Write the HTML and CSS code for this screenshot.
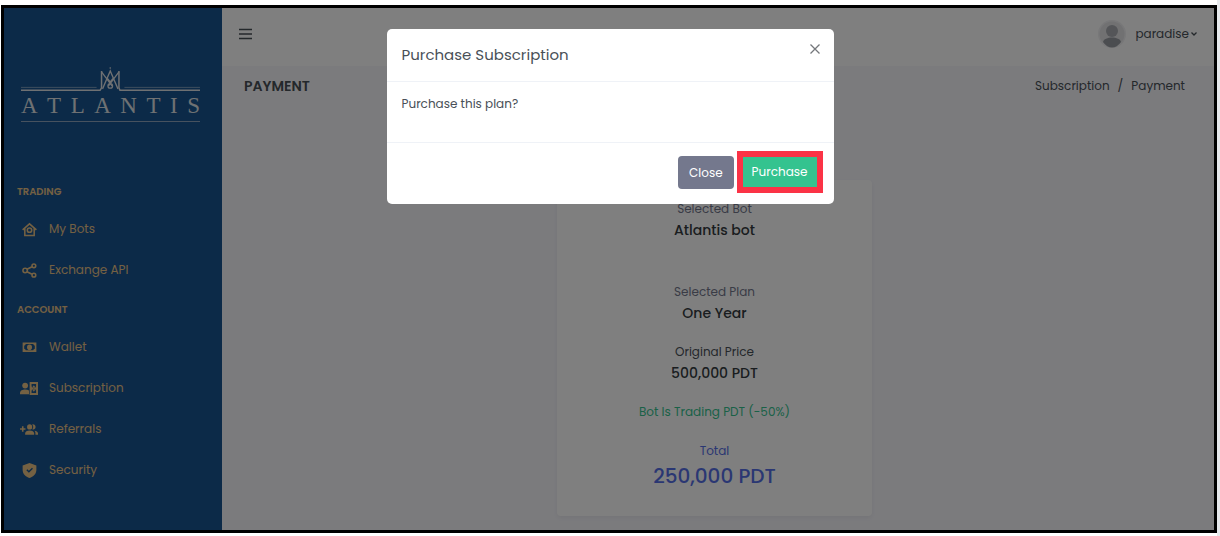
FILE: index.html
```html
<!DOCTYPE html>
<html lang="en">
<head>
<meta charset="utf-8">
<title>Payment</title>
<link rel="stylesheet" href="styles.css">
</head>
<body>
<div class="frame">
  <aside class="sidebar">
    <a class="brand" href="#" aria-label="Atlantis">
      <svg class="crest" viewBox="0 0 180 28" fill="none" stroke="currentColor" aria-hidden="true">
        <path d="M0 21.500H76M104 21.500H180" stroke-width="1" opacity=".5"/>
        <path d="M0 24.500H79.500L81 22V5M180 24.500H99.500L98.500 22V5" stroke-width="1.500"/>
        <path d="M81 6L91.500 20M98.500 6L88 20M82 23L89.750 5L97.500 23M86.500 12L89.750 16L93 12" stroke-width="1.300"/>
        <circle cx="89.750" cy="20" r="2.300" stroke-width="1.300"/>
        <circle cx="89.750" cy="2" r=".800" fill="currentColor" stroke="none"/>
      </svg>
      <span class="wordmark"><span>A</span><span>T</span><span>L</span><span>A</span><span>N</span><span>T</span><span>I</span><span>S</span></span>
    </a>
    <nav class="menu">
      <h2 class="menu-title">TRADING</h2>
      <a class="menu-item" href="#">
        <svg class="icon" viewBox="0 0 24 24" fill="none" stroke="currentColor" stroke-width="2.500"><path d="M1 12.500L12 3L23 12.500M4.500 10V21.500H19.500V10"/><circle cx="12" cy="13" r="3.500"/></svg>
        <span>My Bots</span></a>
      <a class="menu-item" href="#">
        <svg class="icon" viewBox="0 0 24 24" fill="none" stroke="currentColor" stroke-width="2.500"><circle cx="5" cy="12" r="3.500"/><circle cx="19" cy="4.500" r="3"/><circle cx="19" cy="19.500" r="3"/><path d="M8 10L16 6M8 14L16 18"/></svg>
        <span>Exchange API</span></a>
      <h2 class="menu-title">ACCOUNT</h2>
      <a class="menu-item" href="#">
        <svg class="icon" viewBox="0 0 24 24" fill="currentColor"><path fill-rule="evenodd" d="M1 4H23V19H1ZM6 6.500A3 3 0 0 1 3.500 9V14A3 3 0 0 1 6 16.500H18A3 3 0 0 1 20.500 14V9A3 3 0 0 1 18 6.500Z"/><ellipse cx="12" cy="11.500" rx="4" ry="4.500"/></svg>
        <span>Wallet</span></a>
      <a class="menu-item" href="#">
        <svg class="icon icon-wide" viewBox="0 0 28 22" fill="currentColor"><circle cx="8" cy="6.500" r="4.500"/><path d="M0 20V18C0 14 4 12.500 8 12.500C10.500 12.500 12.500 13 14 14V20Z"/><path fill-rule="evenodd" d="M15 1H28V21H15ZM18 4V7A3 3 0 0 0 25 7V4ZM18 18V15A3 3 0 0 1 25 15V18Z"/><path d="M18.500 10L21.500 6L24.500 10ZM18.500 12L21.500 16L24.500 12Z"/></svg>
        <span>Subscription</span></a>
      <a class="menu-item" href="#">
        <svg class="icon icon-wide" viewBox="0 0 28 22" fill="currentColor"><path d="M3 6H5.500V9H8.500V11.500H5.500V14.500H3V11.500H0V9H3Z"/><circle cx="15" cy="7" r="4"/><path d="M8 19V17C8 14 11 12.500 15 12.500S22 14 22 17V19ZM19 3.200A4 4 0 1 1 19 10.800A6 6 0 0 0 19 3.200ZM22.500 13C26 13.500 28 15 28 17V19H24V17C24 15 23.500 14 22.500 13Z"/></svg>
        <span>Referrals</span></a>
      <a class="menu-item" href="#">
        <svg class="icon" viewBox="0 0 24 24" fill="currentColor"><path fill-rule="evenodd" d="M12 0L23 4V11C23 17 18 22 12 24C6 22 1 17 1 11V4ZM7 11.500L11 15.500L17.500 9L16 7.500L11 12.500L8.500 10Z"/></svg>
        <span>Security</span></a>
    </nav>
  </aside>
  <div class="content">
    <header class="topbar">
      <button class="burger" type="button" aria-label="Toggle menu"><svg viewBox="0 0 13 12" stroke="currentColor" stroke-width="1.500"><path d="M0 1.500H13M0 6H13M0 10.500H13"/></svg></button>
      <button class="user" type="button">
        <svg class="avatar" viewBox="0 0 28 28" aria-hidden="true"><circle cx="14" cy="14" r="14" fill="#f0f0f2"/><circle cx="14" cy="14" r="12.500" fill="#e2e2e5"/><circle cx="14" cy="11" r="6" fill="#a8abb0"/><path d="M5 22C6 16 22 16 23 22Q19 27.500 14 27.500T5 22Z" fill="#979ba1"/></svg>
        <span>paradise</span>
        <svg class="chevron" viewBox="0 0 6 4" fill="none" stroke="currentColor" stroke-width="1.300"><path d="M.500 .500L3 3L5.500 .500"/></svg>
      </button>
    </header>
    <div class="page-head">
      <h1 class="page-title">PAYMENT</h1>
      <nav class="crumbs"><a href="#">Subscription</a><span>/</span><span>Payment</span></nav>
    </div>
    <main class="main">
      <div class="card">
        <section class="line line-bot"><p>Selected Bot</p><strong>Atlantis bot</strong></section>
        <section class="line line-plan"><p>Selected Plan</p><strong>One Year</strong></section>
        <section class="line line-price"><p>Original Price</p><strong>500,000 PDT</strong></section>
        <p class="discount">Bot Is Trading PDT (-50%)</p>
        <section class="total"><p>Total</p><strong>250,000 PDT</strong></section>
      </div>
    </main>
  </div>
  <div class="backdrop">
    <div class="modal" role="dialog" aria-modal="true" aria-labelledby="modal-title">
      <div class="modal-head">
        <h2 class="modal-title" id="modal-title">Purchase Subscription</h2>
        <button class="dismiss" type="button" aria-label="Dismiss"><svg viewBox="0 0 10 10" stroke="currentColor" stroke-width="1.300"><path d="M.500 .500L9.500 9.500M9.500 .500L.500 9.500"/></svg></button>
      </div>
      <p class="modal-body">Purchase this plan?</p>
      <div class="modal-foot">
        <button class="btn btn-close" type="button">Close</button>
        <button class="btn btn-buy" type="button">Purchase</button>
      </div>
    </div>
  </div>
</div>
</body>
</html>
```
FILE: styles.css
```css
* { box-sizing: border-box; }
body {
  margin: 0;
  padding: 5px 0 3px 1px;
  min-height: 100vh;
  display: flex;
  border-right: 3px solid #e6e9ec;
  background: #fff;
  color: #495057;
  font: 12px/18px Poppins, Inter, sans-serif;
}
h1, h2, p { margin: 0; }
a { color: inherit; text-decoration: none; }
button { border: 0; padding: 0; background: none; color: inherit; font: inherit; cursor: pointer; }
svg { display: block; flex: none; }

.frame { position: relative; flex: 1; display: flex; border: 3px solid #000; }
.sidebar { flex: 0 0 218px; background: #185490; color: #e8c286; }
.brand { display: block; margin: 58px 22px 0 17px; color: #dfe2e6; }
.crest { width: 100%; }
.wordmark {
  display: flex;
  justify-content: space-between;
  padding-bottom: 3px;
  border-bottom: 1px solid #8fa5bf;
  font: 23px/24px "Liberation Serif", serif;
}
.menu { padding: 60px 13px 0; }
.menu-title { font-size: 10px; line-height: 20px; font-weight: 600; }
.menu-item { display: flex; align-items: center; gap: 10px; height: 41px; }
.menu-item + .menu-title { margin-top: 9px; }
.menu-title + .menu-item { margin-top: 7px; }
.icon { width: 15px; height: 15px; margin: 0 2px 0 5px; }
.icon-wide { width: 18px; height: 15px; margin: 0 1px 0 3px; }

.content { flex: 1; background: #f6f6fb; }
.topbar { display: flex; align-items: center; justify-content: space-between; height: 58px; padding: 0 17px 6px; background: #fff; }
.burger svg { width: 13px; height: 12px; }
.user { display: flex; align-items: center; }
.avatar { width: 28px; height: 28px; margin-right: 9px; }
.chevron { width: 6px; height: 4px; margin-left: 2px; }
.page-head { display: flex; align-items: center; justify-content: space-between; padding: 10px 29px 10px 22px; }
.page-title { font-size: 14px; line-height: 20px; font-weight: 600; }
.crumbs { display: flex; gap: 8px; }
.main { padding: 74px 7px 14px 0; }
.card {
  width: 32%;
  margin: 0 auto;
  padding: 20px 16px 24px;
  border-radius: 4px;
  background: #fff;
  box-shadow: 0 2px 4px #0000000d;
  text-align: center;
}
.line p { color: #74788d; }
.line strong { display: block; font-size: 14px; line-height: 24px; font-weight: 500; color: #343a40; }
.line-plan { margin-top: 41px; }
.line-price { margin-top: 18px; }
.line-price p { color: #495057; }
.discount { margin-top: 18px; color: #34c38f; }
.total { margin-top: 21px; color: #556ee6; }
.total strong { display: block; font-size: 20px; line-height: 32px; font-weight: 500; }

.backdrop { position: absolute; inset: 0; padding: 21px 14px 21px 16px; background: #00000080; }
.modal { max-width: 447px; margin: 0 auto; border-radius: 5px; background: #fff; }
.modal-head { display: flex; justify-content: space-between; padding: 15px 14px 15px 15px; border-bottom: 1px solid #eff2f7; }
.modal-title { font-size: 15px; line-height: 22px; font-weight: 400; }
.dismiss { align-self: flex-start; color: #74777b; }
.dismiss svg { width: 10px; height: 10px; }
.modal-body { padding: 13px 15px 29px; }
.modal-foot { display: flex; align-items: center; justify-content: flex-end; gap: 3px; padding: 8px 11px 11px; border-top: 1px solid #eff2f7; }
.btn { color: #fff; padding: 8px 11px; }
.btn-close { border-radius: 4px; background: #74788d; line-height: 17px; }
.btn-buy { border: 6px solid #fb3346; padding: 6px 9px; background: #34c38f; }
```
